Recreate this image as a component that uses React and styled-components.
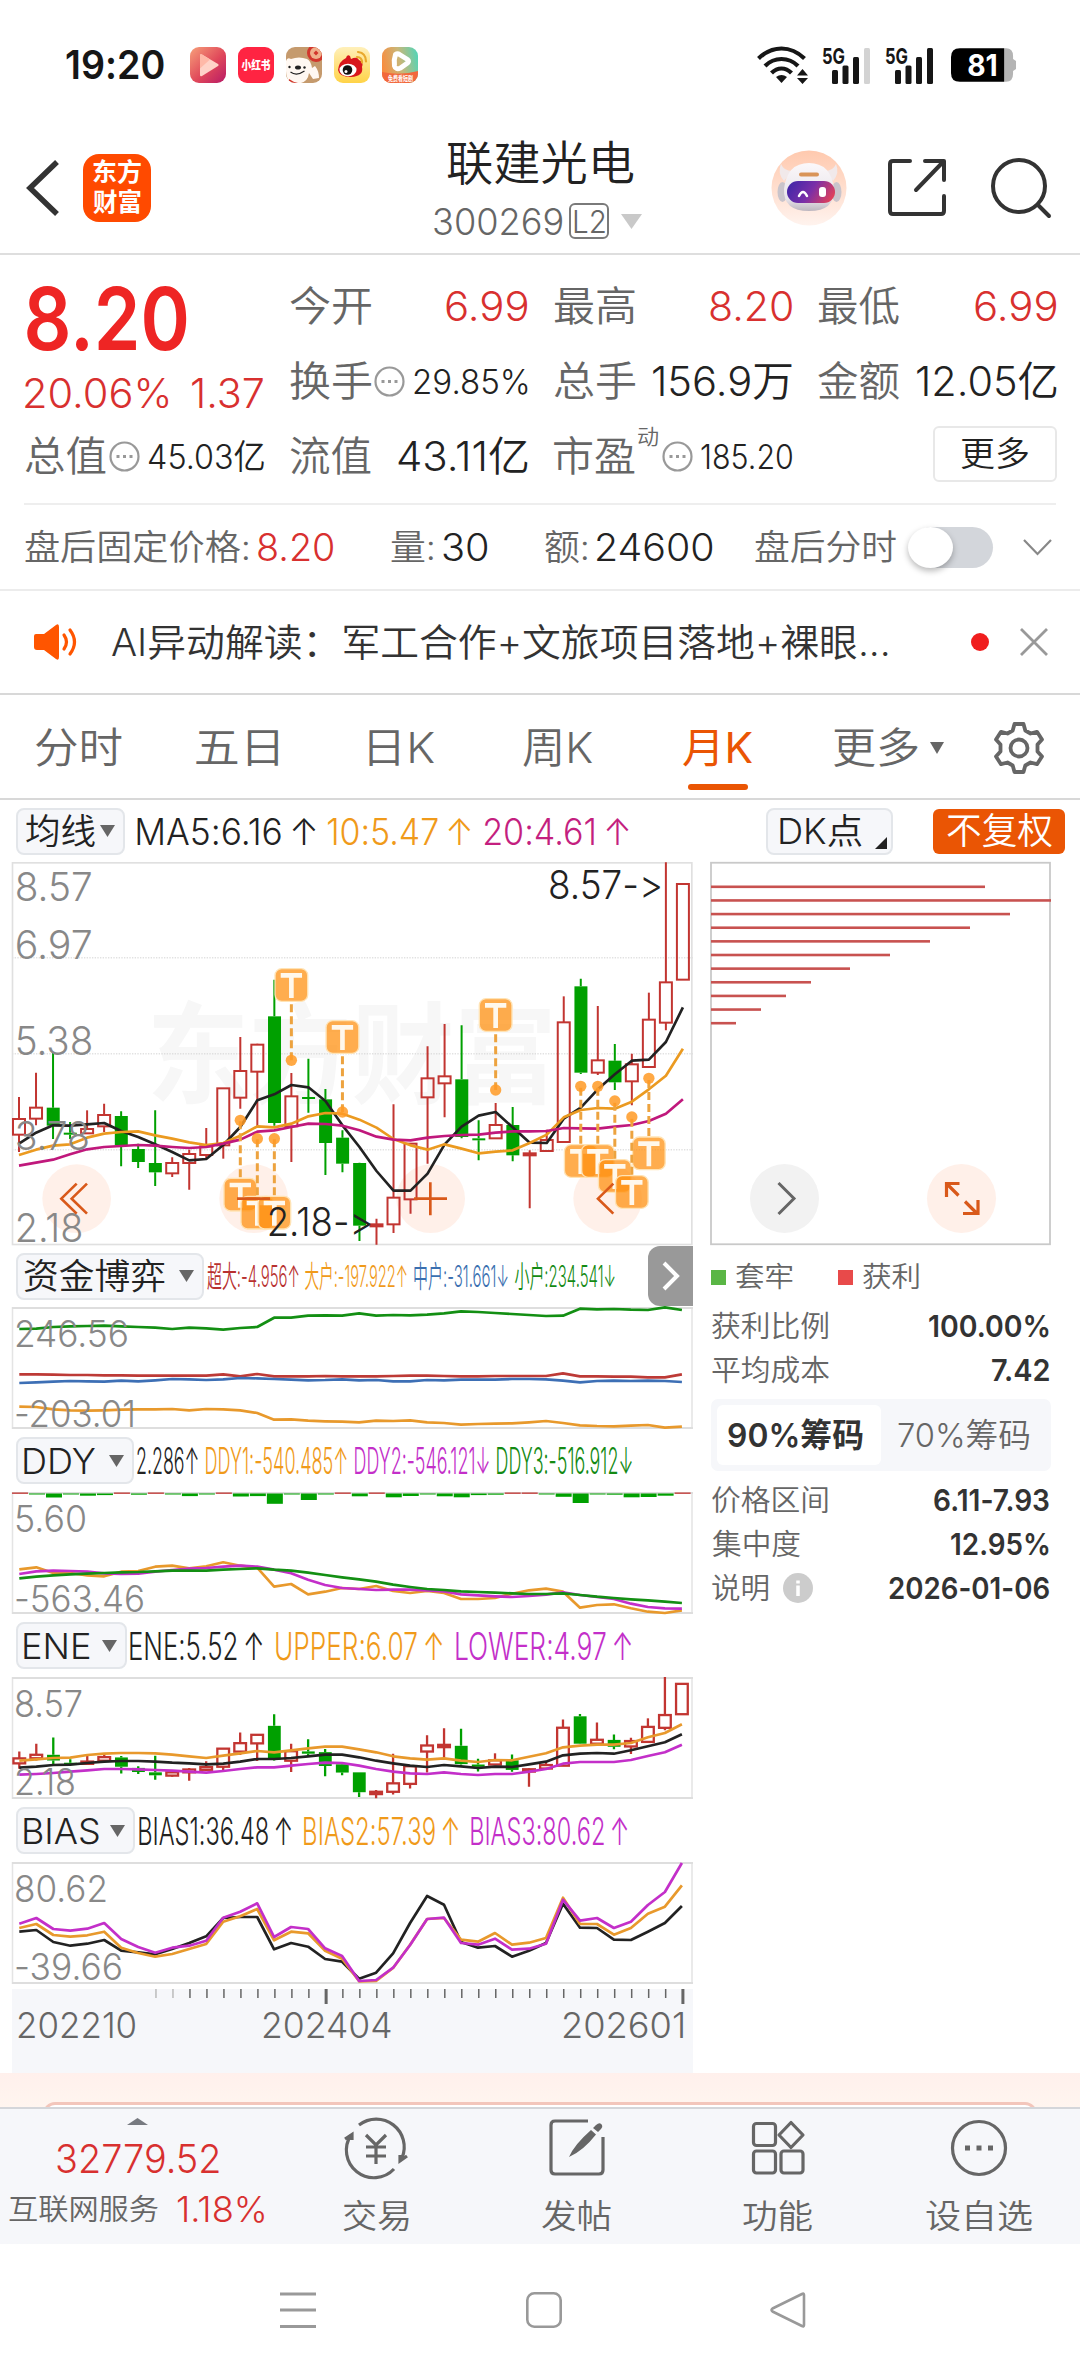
import React, { useLayoutEffect, useRef, useState } from 'react'
import styled, { createGlobalStyle } from 'styled-components'

const FONT = 'Inter, "Noto Sans CJK SC", sans-serif'

const INK = '#222'
const TEXT = '#333'
const MUTED = '#666'
const RED = '#d8302f'
const ACCENT = '#ea5504'
const ORANGE = '#f09a1a'
const MAGENTA = '#c41f7f'
const PURPLE = '#c32fc9'
const GREEN = '#138a13'
const CANDLE_RED = '#c23531'
const CANDLE_GREEN = '#00a000'
const PANEL = '#f6f7fa'

const GlobalStyle = createGlobalStyle`
  * { box-sizing: border-box; }
  body {
    margin: 0;
    background: #fff;
    font-family: ${FONT};
    font-feature-settings: "calt" 0;
    color: ${INK};
  }
  svg { display: block; flex: none; overflow: visible; }
`

const Screen = styled.div`
  width: 1080px;
  height: 2376px;
  overflow: hidden;
  background: #fff;
`

const FitBox = styled.span`
  display: block;
  flex: none;
  width: ${p => p.$w}px;
  margin-left: ${p => p.$ml || 0}px;
  height: ${p => p.$size}px;
  line-height: ${p => p.$size}px;
  font-size: ${p => p.$size}px;
  font-weight: ${p => p.$weight || 350};
  color: ${p => p.$color || INK};
  white-space: nowrap;
`

const FitInner = styled.span`
  display: inline-block;
  transform-origin: 0 50%;
`

// squeezes or stretches a line of text so its ink is exactly w wide
const Fit = ({ w, ml, size = 41, weight, color, children }) => {
  const ref = useRef(null)
  const [transform, setTransform] = useState('none')
  useLayoutEffect(() => {
    const cs = window.getComputedStyle(ref.current)
    const ctx = document.createElement('canvas').getContext('2d')
    ctx.font = `${cs.fontWeight} ${cs.fontSize} ${cs.fontFamily}`
    const m = ctx.measureText(ref.current.textContent)
    const k = w / (m.actualBoundingBoxLeft + m.actualBoundingBoxRight)
    setTransform(`translateX(${m.actualBoundingBoxLeft * k}px) scaleX(${k})`)
  }, [w, children])
  return (
    <FitBox $w={w} $ml={ml} $size={size} $weight={weight} $color={color}>
      <FitInner ref={ref} style={{ transform }}>{children}</FitInner>
    </FitBox>
  )
}

const Label = props => <Fit color={MUTED} {...props} />

/* ---------- status bar ---------- */

const StatusBar = styled.div`
  display: flex;
  align-items: center;
  height: 130px;
  padding: 0 63px 0 66px;
`

const AppIcons = styled.div`
  display: flex;
  gap: 12px;
  margin-left: 26px;
`

const StatusRight = styled.div`
  display: flex;
  align-items: center;
  margin-left: auto;
`

const AppIcon = ({ children }) => (
  <svg width="36" height="36" viewBox="0 0 36 36">{children}</svg>
)

const Signal = ({ last }) => (
  <svg width="50" height="38" viewBox="0 0 50 38">
    <text x="0" y="17.5" fontSize="22" fontWeight="700" textLength="23" lengthAdjust="spacingAndGlyphs" fill="#161616">5G</text>
    <rect x="10" y="24" width="6" height="14" rx="1.5" fill="#161616" />
    <rect x="20.500" y="19.500" width="6" height="18.500" rx="1.500" fill="#161616" />
    <rect x="31" y="11" width="6" height="27" rx="1.500" fill="#161616" />
    <rect x="42" y="2" width="6" height="36" rx="1.500" fill={last} />
  </svg>
)

const Status = () => (
  <StatusBar>
    <Fit w={98} size={40} weight={600} color="#161616">19:20</Fit>
    <AppIcons>
      <AppIcon>
        <defs>
          <linearGradient id="vid" x1="0" y1="0" x2="1" y2="1">
            <stop offset="0" stopColor="#f7a07a" /><stop offset=".55" stopColor="#e0485a" /><stop offset="1" stopColor="#b81a66" />
          </linearGradient>
        </defs>
        <rect width="36" height="36" rx="9" fill="url(#vid)" />
        <path d="M10 8.500q0-2 2-1l16 9.500q1.500 1 0 2L12 29q-2 1-2-1z" fill="#ffd3c8" />
        <path d="M10 8.500q0-2 2-1l8 5-10 9z" fill="#ffb9a8" />
      </AppIcon>
      <AppIcon>
        <rect width="36" height="36" rx="9" fill="#ff2442" />
        <text x="3.500" y="22.500" fontSize="12" fontWeight="900" textLength="29" lengthAdjust="spacingAndGlyphs" fill="#fff">小红书</text>
      </AppIcon>
      <AppIcon>
        <clipPath id="dog"><rect width="36" height="36" rx="9" /></clipPath>
        <g clipPath="url(#dog)">
          <rect width="36" height="36" fill="#c59a6d" />
          <circle cx="30" cy="6" r="9" fill="#d2362c" />
          <circle cx="30" cy="6" r="6" fill="#efb08c" />
          <path d="M27.500 6 30 3.500 32.500 6 30 8.500z" fill="#d2362c" />
          <path d="M0 14q1-4 5-2 8-3 16 0 4 2 5 9l3-2q4 5 4 12l-6 1-4-6q-1 8-8 10H6Q0 33 0 24z" fill="#fff8f2" />
          <ellipse cx="12" cy="20.500" rx="3" ry="2" fill="#222" />
          <circle cx="3.500" cy="20" r="1.200" fill="#222" />
          <circle cx="18.500" cy="20.500" r="1.200" fill="#222" />
          <path d="M4.500 25q6 4.500 14-1" stroke="#222" strokeWidth="1.200" fill="none" />
          <path d="M3 32q4 3 9 4H3z" fill="#d2362c" />
        </g>
      </AppIcon>
      <AppIcon>
        <defs>
          <linearGradient id="wb" x1="0" y1="0" x2="0" y2="1">
            <stop offset="0" stopColor="#fff0ba" /><stop offset="1" stopColor="#ffd347" />
          </linearGradient>
        </defs>
        <rect width="36" height="36" rx="9" fill="url(#wb)" />
        <path d="M4 23Q5 14 12 11q1-4 4-2l1 3q6-3 8 1 5 2 3 7 2 9-11 10Q5 30 4 23z" fill="#d8161c" />
        <ellipse cx="14" cy="23" rx="8.500" ry="6.200" fill="#fff" />
        <circle cx="13.500" cy="23" r="4.800" fill="#111" />
        <circle cx="12" cy="24.500" r="1.500" fill="#fff" />
        <path d="M23 10q5 0 5 5.500M24 5q8 1 8 9.500" stroke="#e9a92d" strokeWidth="2.200" fill="none" strokeLinecap="round" />
      </AppIcon>
      <AppIcon>
        <defs>
          <linearGradient id="pl" x1="0" y1=".5" x2="1" y2=".3">
            <stop offset="0" stopColor="#f98c3f" /><stop offset=".5" stopColor="#c9b778" /><stop offset="1" stopColor="#58d3b4" />
          </linearGradient>
          <clipPath id="plc"><rect width="36" height="36" rx="9" /></clipPath>
        </defs>
        <g clipPath="url(#plc)">
          <rect width="36" height="36" fill="url(#pl)" />
          <path d="M0 25q18 4 36-1v12H0z" fill="#f2683c" />
          <path d="M13.500 7.500q2-1.500 4 0l8 5q2 1.500 0 3.500l-7 5q-5 2-6-2-1-6 1-11.500z" fill="none" stroke="#fff" strokeWidth="5" strokeLinejoin="round" />
        </g>
        <text x="6" y="33.500" fontSize="6.500" fontWeight="700" textLength="25" lengthAdjust="spacingAndGlyphs" fill="#fff">免费看短剧</text>
      </AppIcon>
    </AppIcons>
    <StatusRight>
      <svg width="52" height="38" viewBox="0 0 52 38" fill="none" stroke="#161616" strokeWidth="4.200">
        <path d="M1.500 12.500Q12 2.500 24.500 2.500T47.500 12.500M8 20Q15 13 24.500 13T41 20M14.500 27Q19 22.500 24.500 22.500T34.500 27" />
        <path d="M19 31q5.500-4 11 0l-5.500 6z" fill="#161616" stroke="none" />
        <path d="M40 29.500 45.500 23 51 29.500zM40 32h11l-5.500 6z" fill="#161616" stroke="none" />
      </svg>
      <Gap $w={13} />
      <Signal last="#d3d3d3" />
      <Gap $w={13} />
      <Signal last="#161616" />
      <Gap $w={16} />
      <svg width="66" height="34" viewBox="0 0 67 34">
        <path d="M54 0h2q7 0 7 8v3l3 2v8l-3 2v3q0 8-7 8h-2z" fill="#b4b4b4" />
        <path d="M9 0h45v34H9q-9 0-9-9V9q0-9 9-9z" fill="#000" />
        <text x="16.500" y="28" fontSize="30" fontWeight="700" textLength="31" lengthAdjust="spacingAndGlyphs" fill="#fff">81</text>
      </svg>
    </StatusRight>
  </StatusBar>
)

const Gap = styled.span`
  flex: none;
  width: ${p => p.$w}px;
`

/* ---------- header ---------- */

const HeaderBar = styled.header`
  display: grid;
  grid-template-columns: 409px 1fr 409px;
  height: 125px;
  padding-bottom: 8px;
  border-bottom: 2px solid #dedede;
`

const HeaderLeft = styled.div`
  display: flex;
  align-items: center;
  padding-left: 26px;
`

const HeaderRight = styled.div`
  display: flex;
  align-items: center;
  justify-content: flex-end;
  padding-right: 29px;
`

const Logo = styled.div`
  display: flex;
  flex-direction: column;
  align-items: center;
  justify-content: center;
  gap: 5px;
  width: 68px;
  height: 68px;
  margin-left: 24px;
  border-radius: 16px;
  background: #ff4a00;
`

const TitleBlock = styled.div`
  display: flex;
  flex-direction: column;
  align-items: center;
  padding-top: 9px;
`

const CodeRow = styled.div`
  display: flex;
  align-items: center;
  height: 36px;
  margin-top: 17px;
  margin-right: 4px;
`

const LevelTag = styled.span`
  display: flex;
  align-items: center;
  justify-content: center;
  width: 40px;
  height: 36px;
  margin: 0 12px 0 7px;
  border: 2px solid #7a7a7a;
  border-radius: 6px;
`

const Header = () => (
  <HeaderBar>
    <HeaderLeft>
      <svg width="33" height="56" viewBox="0 0 33 56" fill="none" stroke="#333" strokeWidth="5.500">
        <path d="M31 2 4 28l27 26" />
      </svg>
      <Logo>
        <Fit w={48} size={25} weight={600} color="#fff">东方</Fit>
        <Fit w={48} size={25} weight={600} color="#fff">财富</Fit>
      </Logo>
    </HeaderLeft>
    <TitleBlock>
      <Fit w={187} size={47}>联建光电</Fit>
      <CodeRow>
        <Fit w={128} size={37} color={MUTED}>300269</Fit>
        <LevelTag><Fit w={31} size={31} color={MUTED}>L2</Fit></LevelTag>
        <svg width="21" height="15"><path d="M0 0h21L10.500 15z" fill="#c9c9c9" /></svg>
      </CodeRow>
    </TitleBlock>
    <HeaderRight>
      <svg width="76" height="76" viewBox="0 0 76 76">
        <defs>
          <linearGradient id="halo" x1="0" y1="0" x2="0" y2="1">
            <stop offset="0" stopColor="#ffc9ae" /><stop offset="1" stopColor="#fff3ee" />
          </linearGradient>
          <linearGradient id="visor" x1="0" y1=".3" x2="1" y2=".6">
            <stop offset="0" stopColor="#4326a8" /><stop offset=".5" stopColor="#7a2fa8" /><stop offset="1" stopColor="#e0405a" />
          </linearGradient>
          <linearGradient id="helmet" x1="0" y1="0" x2="0" y2="1">
            <stop offset="0" stopColor="#fbf8fa" /><stop offset=".75" stopColor="#e8e4ea" /><stop offset="1" stopColor="#bdb6bf" />
          </linearGradient>
        </defs>
        <circle cx="38" cy="38" r="37.500" fill="url(#halo)" />
        <ellipse cx="11.500" cy="42" rx="5" ry="10" fill="#c9c4cb" />
        <ellipse cx="65.500" cy="42" rx="5" ry="10" fill="#c9c4cb" />
        <path d="M10 14q-4 9 3 17l8-10q-8 0-11-7zM65 14q4 9-3 17l-8-10q8 0 11-7z" fill="#f1e9ea" />
        <path d="M38 13q22 0 25 26 1 22-25 22T13 39q3-26 25-26z" fill="url(#helmet)" />
        <rect x="28" y="22.500" width="20" height="4" rx="2" fill="#d99458" />
        <rect x="16" y="31" width="48" height="22" rx="11" fill="url(#visor)" />
        <path d="M28 46q4-8 8 0" fill="none" stroke="#fff" strokeWidth="2.500" strokeLinecap="round" />
        <rect x="48" y="37" width="7" height="10" rx="3" fill="#fff" />
      </svg>
      <Gap $w={41} />
      <svg width="58" height="58" viewBox="0 0 58 58" fill="none" stroke="#333" strokeWidth="4" strokeLinecap="round" strokeLinejoin="round">
        <path d="M22 2H5Q2 2 2 5v47q0 3 3 3h48q3 0 3-3V37M37 2h19v19M55 3 28 31" />
      </svg>
      <Gap $w={45} />
      <svg width="60" height="60" viewBox="0 0 60 60" fill="none" stroke="#333" strokeWidth="4" strokeLinecap="round">
        <circle cx="28" cy="28" r="26" />
        <path d="m47 47 11 11" />
      </svg>
    </HeaderRight>
  </HeaderBar>
)

/* ---------- quote ---------- */

const QuoteGrid = styled.section`
  display: grid;
  grid-template-columns: 239px 238px 238px 239px;
  grid-template-rows: 75px 75px 75px;
  column-gap: 26px;
  padding: 14px 0 9px 25px;
`

const PriceCell = styled.div`
  grid-row: span 2;
  display: flex;
  flex-direction: column;
  padding-top: 6px;
`

const Line = styled.div`
  display: flex;
  align-items: center;
`

const ChangeLine = styled(Line)`
  justify-content: space-between;
  margin-top: 11px;
  width: 238px;
`

const Cell = styled.div`
  display: flex;
  align-items: center;
  justify-content: space-between;
`

const Sup = styled.span`
  align-self: flex-start;
  margin: 7px 4px 0 3px;
`

const MoreButton = styled.button`
  display: flex;
  align-items: center;
  justify-content: center;
  align-self: center;
  width: 124px;
  height: 56px;
  margin: 0 0 5px auto;
  padding: 0;
  background: #fff;
  border: 2px solid #e8e8e8;
  border-radius: 6px;
  font-family: inherit;
`

const Hint = () => (
  <svg width="31" height="31" viewBox="0 0 31 31">
    <circle cx="15.500" cy="15.500" r="14" fill="none" stroke="#999" strokeWidth="2.200" />
    <path d="M7.500 14h3v3h-3zM14 14h3v3h-3zM20.500 14h3v3h-3z" fill="#999" />
  </svg>
)

const Quote = () => (
  <QuoteGrid>
    <PriceCell>
      <Fit w={160} ml={2} size={87} weight={600} color="#ee2524">8.20</Fit>
      <ChangeLine>
        <Fit w={143} color={RED}>20.06%</Fit>
        <Fit w={71} color={RED}>1.37</Fit>
      </ChangeLine>
    </PriceCell>
    <Cell><Label w={81}>今开</Label><Fit w={82} color={RED}>6.99</Fit></Cell>
    <Cell><Label w={81}>最高</Label><Fit w={82} color={RED}>8.20</Fit></Cell>
    <Cell><Label w={81}>最低</Label><Fit w={82} color={RED}>6.99</Fit></Cell>
    <Cell>
      <Line><Label w={81}>换手</Label><Gap $w={3} /><Hint /></Line>
      <Fit w={114} size={34}>29.85%</Fit>
    </Cell>
    <Cell><Label w={81}>总手</Label><Fit w={139}>156.9万</Fit></Cell>
    <Cell><Label w={81}>金额</Label><Fit w={140}>12.05亿</Fit></Cell>
    <Cell>
      <Line><Label w={81}>总值</Label><Gap $w={3} /><Hint /></Line>
      <Fit w={115} size={34}>45.03亿</Fit>
    </Cell>
    <Cell><Label w={81}>流值</Label><Fit w={130}>43.11亿</Fit></Cell>
    <Cell>
      <Label w={81}>市盈</Label>
      <Sup><Label w={20} size={21}>动</Label></Sup>
      <Hint />
      <Fit w={91} ml={8} size={34}>185.20</Fit>
    </Cell>
    <MoreButton><Fit w={68} size={34}>更多</Fit></MoreButton>
  </QuoteGrid>
)

const AfterHours = styled.section`
  display: flex;
  align-items: center;
  height: 86px;
  margin: 0 24px;
  border-top: 2px solid #eee;
`

const Toggle = styled.span`
  flex: none;
  width: 82px;
  height: 41px;
  margin: 0 30px 0 15px;
  border-radius: 21px;
  background: #d3d6db;

  &::after {
    content: '';
    display: block;
    width: 45px;
    height: 41px;
    margin-left: -3px;
    border-radius: 50%;
    background: #fff;
    box-shadow: 0 3px 6px rgba(0, 0, 0, .28);
  }
`

const News = styled.section`
  display: flex;
  align-items: center;
  height: 106px;
  padding: 0 30px 1px 34px;
  border-top: 2px solid #ececec;
  border-bottom: 2px solid #d8d8d8;
`

const Dot = styled.span`
  width: 18px;
  height: 18px;
  margin: 0 30px 0 83px;
  border-radius: 50%;
  background: #f01e1e;
`

/* ---------- tabs ---------- */

const TabBar = styled.nav`
  display: flex;
  height: 105px;
  padding-left: 35px;
  border-bottom: 2px solid #d8d8d8;
`

const Tab = styled.div`
  display: flex;
  flex-direction: column;
  align-items: center;
  margin-left: ${p => p.$ml || 0}px;
  padding-top: 32px;

  &::after {
    content: '';
    width: 60px;
    height: 6px;
    margin-top: 15px;
    border-radius: 3px;
    background: ${p => (p.$active ? ACCENT : 'transparent')};
  }
`

const TabTail = styled.div`
  display: flex;
  align-items: center;
  height: 105px;
`

const TABS = [
  ['分时', 87, 0],
  ['五日', 82, 74],
  ['日K', 65, 91],
  ['周K', 69, 89],
  ['月K', 70, 91]
]

const Tabs = () => (
  <TabBar>
    {TABS.map(([name, w, ml]) => (
      <Tab key={name} $ml={ml} $active={name === '月K'}>
        <Fit w={w} size={42} weight={name === '月K' ? 400 : 350} color={name === '月K' ? ACCENT : MUTED}>{name}</Fit>
      </Tab>
    ))}
    <TabTail>
      <Label w={84} ml={81} size={42}>更多</Label>
      <Gap $w={12} />
      <Triangle w={14} h={12} />
      <Gap $w={49} />
      <svg width="52" height="52" viewBox="0 0 52 52" fill="none" stroke="#666" strokeWidth="3.800" strokeLinejoin="round">
        <path d="M21.500 2h9l1.800 6.500 5.200 3 6.500-1.700L49 17.500 44.500 22.500v7L49 34.500 44 42.200l-6.500-1.700-5.200 3L30.500 50h-9l-1.800-6.500-5.200-3L8 42.200 3 34.500l4.500-5v-7L3 17.500 8 9.800l6.500 1.700 5.200-3z" />
        <circle cx="26" cy="26" r="8.500" />
      </svg>
    </TabTail>
  </TabBar>
)

const Triangle = ({ w = 15, h = 12 }) => (
  <svg width={w} height={h} viewBox="0 0 15 12" preserveAspectRatio="none"><path d="M0 0h15L7.500 12z" fill="#666" /></svg>
)

/* ---------- indicator headers ---------- */

const Chip = styled.div`
  display: flex;
  flex: none;
  align-items: center;
  justify-content: space-between;
  width: ${p => p.$w}px;
  height: 47px;
  padding: 0 8px 0 ${p => p.$pl || 6}px;
  background: ${PANEL};
  border: 2px solid #e3e6ea;
  border-radius: 8px;
`

const AverageRow = styled.div`
  display: flex;
  align-items: center;
  height: 62px;
  padding-left: 16px;
`

const AdjustButton = styled.div`
  display: flex;
  align-items: center;
  justify-content: center;
  width: 132px;
  height: 45px;
  margin-left: 40px;
  border-radius: 6px;
  background: ${ACCENT};
`

const PanelHeader = styled.div`
  display: flex;
  align-items: center;
  height: ${p => p.$h || 63}px;
  padding-left: 4px;
`

const SlideButton = styled.div`
  display: flex;
  align-items: center;
  justify-content: center;
  width: 45px;
  height: 60px;
  margin-left: auto;
  border-radius: 12px 0 0 12px;
  background: #999;
`

const CornerMark = styled.svg`
  align-self: flex-end;
  margin: 0 -4px 4px 0;
`

const Averages = () => (
  <AverageRow>
    <Chip $w={109} $pl={8}><Fit w={69} size={35}>均线</Fit><Triangle /></Chip>
    <Fit w={179} ml={12} size={37}>MA5:6.16{'\u2009'}↑</Fit>
    <Fit w={143} ml={12} size={37} color={ORANGE}>10:5.47{'\u2009'}↑</Fit>
    <Fit w={145} ml={13} size={37} color={MAGENTA}>20:4.61{'\u2009'}↑</Fit>
    <Gap $w={137} />
    <Chip $w={127} $pl={12}>
      <Fit w={82} size={35}>DK点</Fit>
      <CornerMark width="12" height="12"><path d="M12 0v12H0z" fill="#222" /></CornerMark>
    </Chip>
    <AdjustButton><Fit w={105} size={36} color="#fff">不复权</Fit></AdjustButton>
  </AverageRow>
)

/* ---------- charts ---------- */

const COUNT = 40

// high, body top, body bottom, low, rising
const CANDLES = [
  [740, 806, 853, 905, 1], [667, 772, 805, 825, 1], [608, 772, 826, 866, 0], [815, 847, 852, 866, 0],
  [780, 836, 849, 849, 1], [760, 794, 828, 845, 1], [783, 797, 885, 948, 0], [880, 896, 935, 953, 0],
  [780, 938, 966, 1007, 0], [921, 938, 969, 980, 1], [898, 911, 938, 1018, 1], [833, 888, 914, 925, 1],
  [714, 714, 885, 925, 1], [560, 662, 742, 775, 1], [580, 583, 664, 830, 1], [388, 498, 818, 826, 0],
  [668, 738, 828, 935, 1], [625, 740, 746, 787, 0], [716, 747, 878, 974, 0], [840, 862, 940, 966, 0],
  [937, 938, 1126, 1172, 0], [1105, 1122, 1125, 1183, 1], [762, 1042, 1122, 1148, 1], [878, 880, 1047, 1090, 1],
  [588, 684, 741, 940, 1], [521, 678, 699, 801, 1], [525, 687, 860, 864, 0], [810, 864, 870, 930, 0],
  [758, 824, 864, 864, 1], [770, 824, 915, 933, 0], [900, 909, 915, 1074, 1], [838, 869, 902, 902, 1],
  [438, 516, 875, 875, 1], [385, 408, 667, 671, 0], [467, 630, 667, 674, 1], [581, 631, 696, 719, 0],
  [610, 642, 693, 765, 1], [427, 508, 650, 650, 1], [36, 396, 517, 540, 1], [101, 101, 388, 388, 1]
]

const MA5 = [880, 847, 825, 826, 822, 818, 842, 860, 882, 905, 930, 926, 884, 830, 750, 732, 704, 711, 752, 825, 890, 962, 1021, 1021, 970, 882, 829, 796, 785, 831, 877, 878, 805, 772, 717, 672, 631, 628, 575, 471]
const MA10 = [914, 898, 886, 882, 862, 850, 845, 843, 855, 865, 876, 884, 878, 856, 828, 831, 820, 798, 788, 790, 808, 832, 866, 885, 898, 882, 895, 909, 904, 900, 878, 853, 801, 779, 773, 775, 754, 717, 676, 595]
const MA20 = [946, 937, 928, 912, 897, 890, 887, 884, 886, 890, 893, 890, 880, 868, 844, 840, 830, 820, 821, 826, 840, 859, 868, 870, 862, 857, 854, 853, 847, 843, 843, 842, 833, 834, 835, 829, 824, 812, 790, 747]

// slot, dot y, badge centre y
const TRADES = [
  [16, 630, 404], [19, 785, 560], [28, 719, 494],
  [13, 810, 1033], [14, 865, 1087], [15, 865, 1087],
  [33, 708, 932], [34, 708, 932], [35, 752, 977], [37, 684, 909], [36, 800, 1025]
]

const slotX = i => 57 + i * 51.07

const line = (ys, x, y) => ys.map((v, i) => `${x(i).toFixed(1)},${y(v).toFixed(1)}`).join(' ')

const Candles = ({ x, y, width, stroke }) => CANDLES.map(([high, top, bottom, low, rising], i) => {
  const cx = x(i)
  const color = rising ? CANDLE_RED : CANDLE_GREEN
  const bodyHeight = Math.max(y(bottom) - y(top), stroke)
  return (
    <g key={i} stroke={color} strokeWidth={stroke}>
      <path d={`M${cx} ${y(high)}V${y(top)}M${cx} ${y(top) + bodyHeight}V${y(low)}`} />
      {rising
        ? <rect x={cx - width / 2 + stroke / 2} y={y(top)} width={width - stroke} height={bodyHeight} fill="none" />
        : <rect x={cx - width / 2 + stroke / 3} y={y(top)} width={width - stroke / 2} height={bodyHeight} fill={color} stroke="none" />}
    </g>
  )
})

const Trade = ({ slot, dot, badge }) => {
  const x = slotX(slot)
  const edge = badge < dot ? badge + 58 : badge - 52
  return (
    <g>
      <path d={`M${x} ${edge}V${dot}`} stroke="#eda33f" strokeWidth="9" strokeDasharray="24 12" />
      <circle cx={x} cy={dot} r="17" fill="#ff9a25" fillOpacity=".85" />
      <rect x={x - 49} y={badge - 49} width="98" height="98" rx="20" fill="#ff9010" fillOpacity=".74" stroke="#ffe3b5" strokeWidth="4" />
      <path d={`M${x - 32} ${badge - 29}h64M${x} ${badge - 29}v68`} stroke="#fff8ec" strokeWidth="14" />
    </g>
  )
}

const MainChart = () => {
  const y = v => v
  return (
    <svg width="681" height="383" viewBox="36 35 2043 1149">
      <g fill="#f7f7f7" fontSize="330" fontWeight="700">
        <text x="440" y="735" textLength="1230" lengthAdjust="spacingAndGlyphs">东方财富</text>
      </g>
      <g stroke="#d2d2d2" strokeWidth="3" strokeDasharray="4 4">
        <path d="M36 322.500h2043M36 610.500h2043M36 898.500h2043" />
      </g>
      <rect x="37.500" y="37.500" width="2038" height="1145" fill="none" stroke="#e0e0e0" strokeWidth="5" />
      <g fill="#ffe9df" fillOpacity=".7">
        <circle cx="230" cy="1045" r="103" />
        <circle cx="761" cy="1045" r="103" />
        <circle cx="1292" cy="1045" r="103" />
        <circle cx="1823" cy="1045" r="103" />
      </g>
      <Candles x={slotX} y={y} width={42} stroke={6} />
      <g fill="none" strokeWidth="8" strokeLinejoin="round">
        <polyline points={line(MA5, slotX, y)} stroke="#222" />
        <polyline points={line(MA10, slotX, y)} stroke="#eb9a20" />
        <polyline points={line(MA20, slotX, y)} stroke="#c0187c" />
      </g>
      {TRADES.map(([slot, dot, badge]) => <Trade key={slot} slot={slot} dot={dot} badge={badge} />)}
      <g fill="#888" fontSize="118" fontWeight="350">
        <text x="44" y="152" textLength="234" lengthAdjust="spacingAndGlyphs">8.57</text>
        <text x="44" y="325" textLength="234" lengthAdjust="spacingAndGlyphs">6.97</text>
        <text x="44" y="614" textLength="236" lengthAdjust="spacingAndGlyphs">5.38</text>
        <text x="44" y="898" textLength="226" lengthAdjust="spacingAndGlyphs">3.78</text>
        <text x="44" y="1174" textLength="206" lengthAdjust="spacingAndGlyphs">2.18</text>
      </g>
      <g fill="#222" fontSize="118" fontWeight="350">
        <text x="1644" y="146" textLength="345" lengthAdjust="spacingAndGlyphs">8.57-&gt;</text>
        <text x="800" y="1158" textLength="320" lengthAdjust="spacingAndGlyphs">2.18-&gt;</text>
      </g>
      <g fill="none" stroke="#d9591a" strokeWidth="8">
        <path d="m230 1000-46 45 46 45M261 1000l-46 45 46 45M711 1045h99M1242 1045h99M1291 996v99M1840 1000l-46 45 46 45" />
      </g>
    </svg>
  )
}

const PANEL_TOP = 204
const panelX = i => 7.300 + i * 16.990
const panelY = v => (v - PANEL_TOP) / 3
const spaced = (text, x, y, w) => (
  <text x={x} y={y} textLength={w} lengthAdjust="spacingAndGlyphs" fontSize="37" fontWeight="350" fill="#888">{text}</text>
)

const Panel = ({ high, low, highW, lowW, lowY = 119.500, series, children }) => (
  <svg width="681" height="122" viewBox="0 0 681 122">
    <path d="M.500 0v122M680 0v122" stroke="#e4e4e4" strokeWidth="1.500" />
    <path d="M0 1h681M0 121h681" stroke="#dedede" strokeWidth="2" />
    {children}
    <g fill="none" strokeWidth="2.700" strokeLinejoin="round">
      {series.map(([color, ys], i) => <polyline key={i} points={line(ys, panelX, panelY)} stroke={color} />)}
    </g>
    {spaced(high, 2, 40, highW)}
    {spaced(low, 2, lowY, lowW)}
  </svg>
)

const FUNDS = [
  ['#138f13', [270, 269, 264, 262, 261, 260, 262, 264, 266, 270, 266, 268, 272, 267, 264, 236, 236, 230, 229, 230, 223, 230, 228, 229, 227, 223, 217, 219, 222, 225, 228, 231, 230, 209, 211, 210, 212, 213, 205, 213]],
  ['#bd3a36', [406, 406, 407, 408, 408, 409, 409, 410, 410, 410, 410, 410, 406, 412, 405, 412, 412, 412, 411, 412, 412, 412, 411, 410, 410, 411, 412, 412, 411, 411, 411, 411, 403, 412, 412, 413, 413, 415, 415, 406]],
  ['#3d6fb5', [432, 430, 428, 426, 427, 428, 425, 427, 424, 420, 421, 423, 421, 417, 418, 420, 422, 424, 423, 421, 424, 423, 427, 427, 423, 424, 422, 422, 422, 420, 420, 421, 425, 430, 426, 425, 426, 425, 426, 429]],
  ['#e8992c', [503, 504, 511, 514, 515, 514, 512, 511, 511, 510, 514, 510, 511, 514, 522, 542, 541, 545, 547, 548, 550, 545, 546, 544, 550, 552, 557, 555, 554, 553, 550, 546, 552, 559, 561, 562, 560, 558, 566, 563]]
]

// the scale of this one starts 555 lower
const lift = ys => ys.map(v => v - 555)

const DDY = [
  ['#e8992c', lift([991, 985, 1002, 1002, 1009, 1012, 998, 996, 983, 980, 988, 982, 970, 980, 986, 1043, 1035, 1066, 1058, 1047, 1050, 1041, 1056, 1062, 1056, 1062, 1080, 1080, 1077, 1064, 1054, 1049, 1058, 1106, 1098, 1096, 1108, 1118, 1122, 1114])],
  [PURPLE, lift([1005, 997, 995, 996, 998, 1003, 1005, 1004, 998, 993, 989, 987, 983, 980, 983, 992, 1003, 1022, 1038, 1047, 1050, 1053, 1052, 1052, 1054, 1057, 1066, 1069, 1072, 1074, 1071, 1067, 1060, 1068, 1074, 1080, 1094, 1104, 1108, 1109])],
  ['#138f13', lift([1018, 1013, 1009, 1006, 1004, 1002, 1000, 999, 997, 995, 995, 995, 992, 990, 988, 992, 995, 1001, 1008, 1015, 1021, 1028, 1037, 1044, 1050, 1053, 1057, 1059, 1061, 1063, 1065, 1065, 1063, 1068, 1073, 1077, 1081, 1084, 1088, 1092])]
]

// 0 is a rising month, drawn as a thin red dash
const DDY_BARS = [0, 1, 4, 1, 2.200, 1.600, 0, 1.200, 0, 1, 2.600, 1, 0, 3, 2.600, 10.300, 1, 6.500, 1, 0, 2.800, 0, 3.800, 2.500, 1, 2.800, 3.800, 1.600, 1.200, 0, 0, 1, 3.300, 9.500, 1, 1.200, 3.800, 3.500, 2.200, 0]

const ENE = [
  ['#e8992c', [455, 451, 447, 446, 438, 434, 432, 432, 433, 437, 442, 447, 440, 433, 426, 430, 424, 418, 413, 413, 421, 430, 442, 448, 452, 448, 455, 459, 453, 454, 443, 433, 415, 410, 407, 407, 402, 385, 372, 346]],
  ['#222', [476, 473, 468, 467, 462, 458, 456, 456, 458, 461, 463, 466, 464, 458, 450, 450, 447, 442, 437, 437, 445, 455, 463, 470, 474, 468, 472, 477, 473, 474, 466, 458, 439, 434, 432, 434, 424, 412, 400, 376]],
  [PURPLE, [497, 495, 492, 488, 484, 480, 480, 481, 483, 485, 488, 491, 486, 480, 475, 475, 470, 465, 461, 462, 470, 480, 488, 493, 495, 490, 495, 498, 495, 495, 488, 480, 464, 459, 459, 459, 453, 441, 430, 407]]
]

const BIAS = [
  ['#222', lift([968, 963, 999, 1010, 1004, 993, 1025, 1030, 1036, 1020, 1002, 982, 927, 924, 924, 1021, 1002, 1013, 1050, 1058, 1109, 1091, 1033, 942, 861, 887, 999, 1016, 1011, 1043, 1025, 1002, 884, 956, 957, 992, 993, 968, 942, 891])],
  ['#e8992c', lift([957, 945, 978, 983, 979, 968, 1016, 1032, 1043, 1035, 1020, 1005, 938, 922, 900, 994, 968, 973, 1025, 1049, 1117, 1116, 1077, 1007, 930, 927, 992, 998, 972, 1007, 1001, 987, 866, 945, 945, 977, 957, 914, 893, 829])],
  [PURPLE, lift([944, 927, 960, 965, 959, 942, 990, 1014, 1031, 1016, 1010, 995, 926, 908, 883, 984, 954, 960, 1018, 1041, 1116, 1113, 1076, 1008, 930, 926, 1002, 1007, 989, 1022, 1019, 1004, 872, 935, 927, 957, 938, 888, 849, 762])]
]

const TimeAxis = styled.div`
  height: 84px;
  margin-top: 5px;
  background: ${PANEL};
`

const AxisLabels = styled.div`
  display: flex;
  padding: 2px 0 0 6px;
`

const Axis = () => (
  <TimeAxis>
    <svg width="681" height="16">
      {Array.from({ length: COUNT }, (_, i) => i).filter(i => i > 7).map(i => {
        const major = i === 18 || i === 39
        return (
          <rect
            key={i}
            x={panelX(i) - (major ? 0.500 : 0)}
            y="0"
            width={major ? 3 : 1.500}
            height={major ? 15 : 9}
            fill={i < 10 ? '#bbb' : '#666'}
          />
        )
      })}
    </svg>
    <AxisLabels>
      <Fit w={117} size={36} color={MUTED}>202210</Fit>
      <Fit w={128} ml={128} size={36} color={MUTED}>202404</Fit>
      <Fit w={120} ml={172} size={36} color={MUTED}>202601</Fit>
    </AxisLabels>
  </TimeAxis>
)

const ChartArea = styled.section`
  display: grid;
  grid-template-columns: 681px 341px;
  column-gap: 17px;
  padding-left: 12px;
  height: 1211px;
`

const LeftCharts = () => (
  <div>
    <MainChart />
    <PanelHeader $h={62}>
      <Chip $w={188}><Fit w={141} size={35}>资金博弈</Fit><Triangle /></Chip>
      <Fit w={92} ml={3} size={30} color="#b8312f">超大:-4.956↑</Fit>
      <Fit w={102} ml={6} size={30} color={ORANGE}>大户:-197.922↑</Fit>
      <Fit w={94} ml={7} size={30} color="#3a6fb0">中户:-31.661↓</Fit>
      <Fit w={100} ml={7} size={30} color={GREEN}>小户:234.541↓</Fit>
      <SlideButton>
        <svg width="18" height="30" viewBox="0 0 18 30" fill="none" stroke="#fff" strokeWidth="4"><path d="m2 2 13 13L2 28" /></svg>
      </SlideButton>
    </PanelHeader>
    <Panel high="246.56" low="-203.01" highW={115} lowW={122} series={FUNDS} />
    <PanelHeader>
      <Chip $w={118}><Fit w={71} size={36}>DDY</Fit><Triangle /></Chip>
      <Fit w={61} ml={3} size={37}>2.286↑</Fit>
      <Fit w={141} ml={8} size={37} color={ORANGE}>DDY1:-540.485↑</Fit>
      <Fit w={134} ml={8} size={37} color={PURPLE}>DDY2:-546.121↓</Fit>
      <Fit w={135} ml={8} size={37} color={GREEN}>DDY3:-516.912↓</Fit>
    </PanelHeader>
    <Panel high="5.60" low="-563.46" highW={73} lowW={131} series={DDY}>
      {DDY_BARS.map((h, i) => (
        <rect key={i} x={panelX(i) - 7.300} y={h ? 1.500 : 0.500} width="16" height={h || 1.300} fill={h ? CANDLE_GREEN : CANDLE_RED} />
      ))}
    </Panel>
    <PanelHeader>
      <Chip $w={111}><Fit w={65} size={36}>ENE</Fit><Triangle /></Chip>
      <Fit w={132} ml={3} size={38}>ENE:5.52{'\u2009'}↑</Fit>
      <Fit w={166} ml={14} size={38} color={ORANGE}>UPPER:6.07{'\u2009'}↑</Fit>
      <Fit w={175} ml={14} size={38} color={PURPLE}>LOWER:4.97{'\u2009'}↑</Fit>
    </PanelHeader>
    <Panel high="8.57" low="2.18" highW={69} lowW={62} lowY={117.500} series={ENE}>
      <Candles x={panelX} y={v => (v - 36) * 0.1057} width={14} stroke={2.300} />
    </Panel>
    <PanelHeader>
      <Chip $w={119}><Fit w={75} size={36}>BIAS</Fit><Triangle /></Chip>
      <Fit w={152} ml={4} size={38}>BIAS1:36.48{'\u2009'}↑</Fit>
      <Fit w={154} ml={13} size={38} color={ORANGE}>BIAS2:57.39{'\u2009'}↑</Fit>
      <Fit w={156} ml={13} size={38} color={PURPLE}>BIAS3:80.62{'\u2009'}↑</Fit>
    </PanelHeader>
    <Panel high="80.62" low="-39.66" highW={94} lowW={109} lowY={117.500} series={BIAS} />
    <Axis />
  </div>
)

/* ---------- chips distribution ---------- */

const SideColumn = styled.div`
  width: 341px;
`

const Legend = styled.div`
  display: flex;
  align-items: center;
  height: 59px;
  padding: 5px 0 0 1px;
`

const Swatch = styled.span`
  width: 15px;
  height: 15px;
  margin: 0 10px 0 ${p => p.$ml || 0}px;
  background: ${p => p.$color};
`

const InfoRow = styled.div`
  display: flex;
  align-items: center;
  justify-content: space-between;
  height: 44px;
  padding: 0 2px;
`

const Segment = styled.div`
  display: flex;
  align-items: center;
  height: 72px;
  margin: 7px 0 7px 1px;
  padding: 6px;
  border-radius: 7px;
  background: ${PANEL};
`

const SegmentItem = styled.div`
  display: flex;
  align-items: center;
  justify-content: center;
  width: 164px;
  height: 60px;
  padding-right: ${p => (p.$active ? 8 : 0)}px;
  border-radius: 6px;
  background: ${p => (p.$active ? '#fff' : 'transparent')};
`

const CHIP_BARS = [274, 340, 299, 259, 219, 179, 139, 100, 75, 50, 25]

const Distribution = () => (
  <svg width="341" height="383" viewBox="0 0 341 383">
    <rect x="1" y=".750" width="339" height="381.500" fill="none" stroke="#c9c9c9" strokeWidth="1.800" />
    {CHIP_BARS.map((w, i) => (
      <rect key={i} x="1" y={23.500 + i * 13.640} width={w} height="2.600" fill="#c85250" />
    ))}
    <circle cx="74.500" cy="336.500" r="34.500" fill="#f2f2f2" />
    <path d="m68.500 321 15.500 15.500L68.500 352" fill="none" stroke="#666" strokeWidth="3" />
    <circle cx="251.500" cy="336.500" r="34.500" fill="#fff0e9" />
    <path d="M249.500 321.500h-13v13.500M237 322l11.500 11.500M255 339.500l11.500 11.500M268 338v13.500h-15" fill="none" stroke="#d9591a" strokeWidth="3.200" />
  </svg>
)

const Value = props => <Fit size={30} weight={600} color={TEXT} {...props} />

const SidePanel = () => (
  <SideColumn>
    <Distribution />
    <Legend>
      <Swatch $color="#5ab645" /><Label w={57} size={28}>套牢</Label>
      <Swatch $ml={45} $color="#e84a4a" /><Label w={56} size={28}>获利</Label>
    </Legend>
    <InfoRow><Label w={116} size={29}>获利比例</Label><Value w={120}>100.00%</Value></InfoRow>
    <InfoRow><Label w={117} size={29}>平均成本</Label><Value w={57}>7.42</Value></InfoRow>
    <Segment>
      <SegmentItem $active><Fit w={135} size={33} weight={600} color={TEXT}>90%筹码</Fit></SegmentItem>
      <SegmentItem><Label w={131} size={33}>70%筹码</Label></SegmentItem>
    </Segment>
    <InfoRow><Label w={116} size={29}>价格区间</Label><Value w={115}>6.11-7.93</Value></InfoRow>
    <InfoRow><Label w={88} size={29}>集中度</Label><Value w={98}>12.95%</Value></InfoRow>
    <InfoRow>
      <Line>
        <Label w={56} size={29}>说明</Label>
        <Gap $w={15} />
        <svg width="30" height="30"><circle cx="15" cy="15" r="15" fill="#ccc" /><path d="M15 12.500v10.500M15 7.500v3" stroke="#fff" strokeWidth="3.500" /></svg>
      </Line>
      <Value w={160}>2026-01-06</Value>
    </InfoRow>
  </SideColumn>
)

/* ---------- bottom ---------- */

const Promo = styled.div`
  height: 34px;
  padding: 29px 43px 0;
  overflow: hidden;
  background: linear-gradient(#fff0ec, #fff5ef);
`

const PromoCard = styled.div`
  height: 40px;
  border: 3px solid #f3c6bb;
  border-radius: 12px;
  background: #fff;
`

const BottomBar = styled.footer`
  display: grid;
  grid-template-columns: 275px 201px 201px 201px 202px;
  height: 137px;
  border-top: 2px solid #d4d6da;
  background: ${PANEL};
`

const IndexCell = styled.div`
  display: flex;
  flex-direction: column;
  align-items: center;
  padding-top: 9px;
`

const IndexValue = styled.div`
  margin-top: 14px;
`

const IndexName = styled.div`
  display: flex;
  align-items: center;
  margin-top: 12px;
  padding-right: 2px;
`

const Action = styled.div`
  display: flex;
  flex-direction: column;
  align-items: center;
  gap: 22px;
  padding-top: 9px;
`

const ActionIcon = ({ children }) => (
  <svg width="68" height="60" viewBox="0 0 68 60" fill="none" stroke="#666" strokeWidth="3.200">{children}</svg>
)

const NavBar = styled.div`
  display: flex;
  align-items: center;
  height: 132px;
  padding-left: 280px;
`

const Bottom = () => (
  <>
    <BottomBar>
      <IndexCell>
        <svg width="21" height="7"><path d="M0 7h21L10.500 0z" fill="#777a80" /></svg>
        <IndexValue><Fit w={162} size={40} color={RED}>32779.52</Fit></IndexValue>
        <IndexName>
          <Label w={149} size={29}>互联网服务</Label>
          <Fit w={87} ml={19} size={36} color={RED}>1.18%</Fit>
        </IndexName>
      </IndexCell>
      <Action>
        <ActionIcon>
          <path d="M17 7A28 28 0 0 1 60 40M52 51A27.500 27.500 0 0 1 9 17M3 21l7-4.500V22M65 38l-7 5v-6" />
          <path d="m24 17 10 10 10-10M34 27v19M24 29h20M24 38h20" />
        </ActionIcon>
        <Label w={66} size={33}>交易</Label>
      </Action>
      <Action>
        <ActionIcon>
          <path d="M45 5H12q-4 0-4 4v45q0 4 4 4h44q4 0 4-4V21" transform="translate(0 -2)" />
          <path d="M53 7q4-3.500 6 0 1 2-1 4l-3 3-5-4zM48 12l5 4.500Q40 33 26 39 31 27 48 12z" fill="#666" stroke="none" />
        </ActionIcon>
        <Label w={69} size={33}>发帖</Label>
      </Action>
      <Action>
        <ActionIcon>
          <rect x="9.500" y="5.500" width="22" height="22" rx="3" />
          <path d="m47 4.500 12 12.500-12 12.500L35 17z" strokeLinejoin="round" />
          <rect x="9.500" y="33" width="22" height="22" rx="3" />
          <rect x="37" y="33" width="22" height="22" rx="3" />
        </ActionIcon>
        <Label w={69} size={33}>功能</Label>
      </Action>
      <Action>
        <ActionIcon>
          <circle cx="34" cy="30" r="26.500" />
          <path d="M20 30h5M31.500 30h5M43 30h5" strokeWidth="5" />
        </ActionIcon>
        <Label w={106} size={33}>设自选</Label>
      </Action>
    </BottomBar>
    <NavBar>
      <svg width="36" height="36" viewBox="0 0 36 36" stroke="#999" strokeWidth="2.800"><path d="M0 2h36M0 18h36M0 34.500h36" /></svg>
      <Gap $w={210} />
      <svg width="36" height="36" viewBox="0 0 36 36" fill="none" stroke="#999" strokeWidth="2.600"><rect x="1.300" y="1.300" width="33.400" height="33.400" rx="7" /></svg>
      <Gap $w={208} />
      <svg width="36" height="36" viewBox="0 0 36 36" fill="none" stroke="#999" strokeWidth="2.600" strokeLinejoin="round"><path d="M34 3v30q0 2-2 1L2.500 19.500q-2-1.500 0-3L32 2q2-1 2 1z" /></svg>
    </NavBar>
  </>
)

const App = () => (
  <Screen>
    <GlobalStyle />
    <Status />
    <Header />
    <Quote />
    <AfterHours>
      <Label w={223} ml={1} size={35}>盘后固定价格:</Label>
      <Fit w={76} ml={10} size={38} color={RED}>8.20</Fit>
      <Label w={42} ml={57} size={35}>量:</Label>
      <Fit w={45} ml={10} size={38}>30</Fit>
      <Label w={42} ml={57} size={35}>额:</Label>
      <Fit w={116} ml={10} size={38}>24600</Fit>
      <Label w={141} ml={42} size={35}>盘后分时</Label>
      <Toggle />
      <svg width="29" height="17" viewBox="0 0 29 17" fill="none" stroke="#888" strokeWidth="2.200"><path d="m1 1 13.500 14L28 1" /></svg>
    </AfterHours>
    <News>
      <svg width="44" height="36" viewBox="0 0 44 36">
        <path d="M2 10h8L22 1q3-2 3 2v30q0 4-3 2l-12-9H3q-3 0-3-3V12q0-2 2-2z" fill="#ff5500" />
        <path d="M30 11q5 7 0 14M36 6q9 12 0 24" fill="none" stroke="#ff5500" strokeWidth="3.200" strokeLinecap="round" />
      </svg>
      <Fit w={776} ml={34} size={38} color={TEXT}>AI异动解读：军工合作+文旅项目落地+裸眼...</Fit>
      <Dot />
      <svg width="30" height="30" viewBox="0 0 30 30" stroke="#999" strokeWidth="2.800"><path d="m2 2 26 26M28 2 2 28" /></svg>
    </News>
    <Tabs />
    <Averages />
    <ChartArea>
      <LeftCharts />
      <SidePanel />
    </ChartArea>
    <Promo><PromoCard /></Promo>
    <Bottom />
  </Screen>
)

export default App
